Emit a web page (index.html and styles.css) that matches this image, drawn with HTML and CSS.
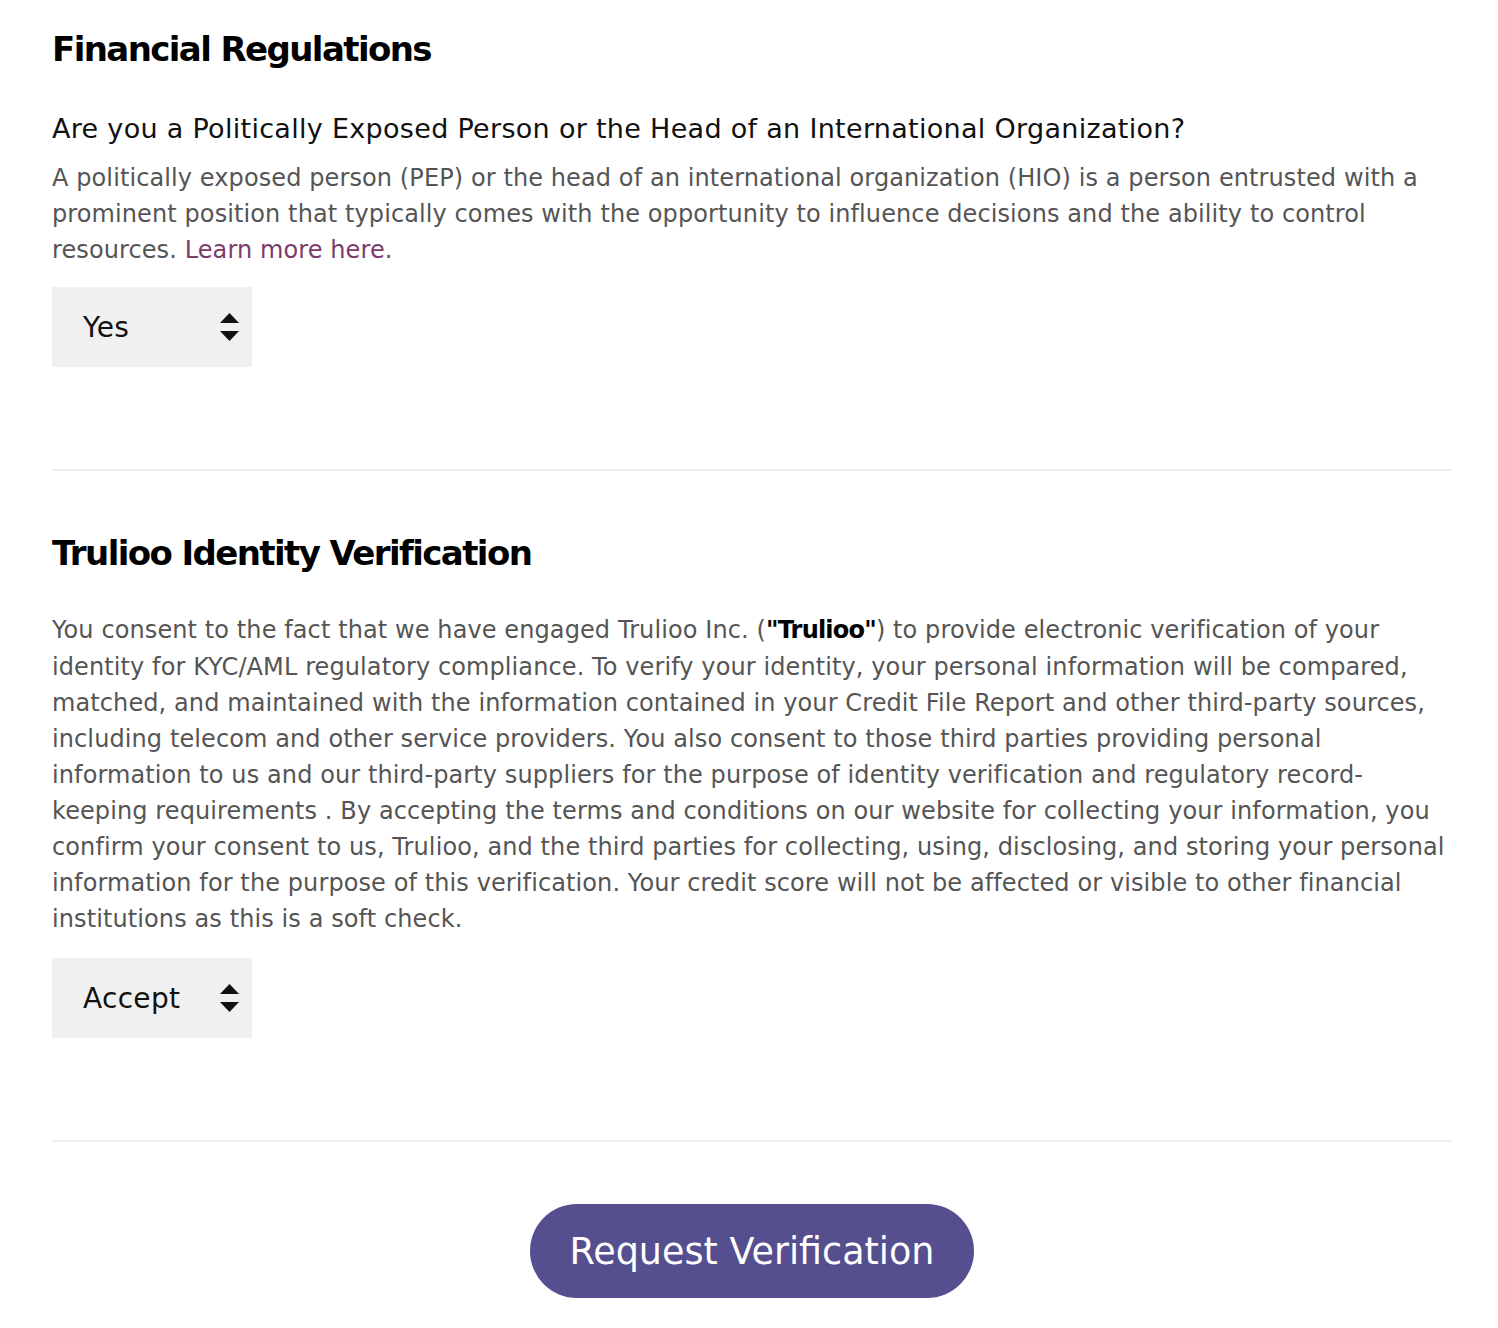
FILE: index.html
```html
<!DOCTYPE html>
<html lang="en">
<head>
<meta charset="utf-8">
<title>Verification</title>
<link rel="stylesheet" href="styles.css">
</head>
<body>
<main class="page">
  <section class="section">
    <h2 class="section-title">Financial Regulations</h2>
    <h3 class="question">Are you a Politically Exposed Person or the Head of an International Organization?</h3>
    <p class="desc">A politically exposed person (PEP) or the head of an international organization (HIO) is a person entrusted with a prominent position that typically comes with the opportunity to influence decisions and the ability to control resources. <a class="link" href="#">Learn more here</a>.</p>
    <div class="select">
      <span class="select-value">Yes</span>
      <svg class="select-arrows" width="19" height="28" viewBox="0 0 19 28"><path d="M9.5 0L19 10H0Z"/><path d="M0 18H19L9.5 28Z"/></svg>
    </div>
  </section>
  <hr class="divider">
  <section class="section section-2">
    <h2 class="section-title">Trulioo Identity Verification</h2>
    <p class="desc desc-long">You consent to the fact that we have engaged Trulioo Inc. (<strong class="strong">"Trulioo"</strong>) to provide electronic verification of your identity for KYC/AML regulatory compliance. To verify your identity, your personal information will be compared, matched, and maintained with the information contained in your Credit File Report and other third-party sources, including telecom and other service providers. You also consent to those third parties providing personal information to us and our third-party suppliers for the purpose of identity verification and regulatory record-keeping requirements . By accepting the terms and conditions on our website for collecting your information, you confirm your consent to us, Trulioo, and the third parties for collecting, using, disclosing, and storing your personal information for the purpose of this verification. Your credit score will not be affected or visible to other financial institutions as this is a soft check.</p>
    <div class="select select-2">
      <span class="select-value">Accept</span>
      <svg class="select-arrows" width="19" height="28" viewBox="0 0 19 28"><path d="M9.5 0L19 10H0Z"/><path d="M0 18H19L9.5 28Z"/></svg>
    </div>
  </section>
  <hr class="divider">
  <div class="actions">
    <button class="btn" type="button">Request Verification</button>
  </div>
</main>
</body>
</html>
```
FILE: styles.css
```css
html, body {
  margin: 0;
  padding: 0;
  background: #fff;
}
body {
  font-family: "DejaVu Sans", "Noto Sans", sans-serif;
  color: #555;
}
.page {
  width: 1400px;
  margin: 0 0 0 52px;
  padding-top: 27px;
}
.section-title {
  margin: 0;
  font-size: 34px;
  line-height: 44px;
  font-weight: 700;
  color: #000;
  letter-spacing: -1.6px;
}
.question {
  margin: 40px 0 0;
  font-size: 27px;
  line-height: 36px;
  font-weight: 400;
  color: #111;
  letter-spacing: 0.3px;
}
.desc {
  margin: 13px 0 0;
  font-size: 24px;
  line-height: 36px;
  color: #555;
  letter-spacing: 0.1px;
}
.link {
  color: #7b3b6b;
  text-decoration: none;
}
.strong {
  display: inline-block;
  line-height: 38px;
  color: #000;
  font-weight: 700;
  letter-spacing: -0.8px;
}
.select {
  margin-top: 19px;
  width: 200px;
  height: 80px;
  box-sizing: border-box;
  background: #f0f0f0;
  display: flex;
  align-items: center;
  justify-content: space-between;
  padding: 0 13px 0 31px;
}
.select-2 {
  margin-top: 21px;
}
.select-value {
  font-size: 28px;
  color: #111;
  letter-spacing: 0.3px;
}
.select-arrows {
  fill: #111;
  display: block;
}
.divider {
  margin: 102px 0 0;
  border: 0;
  height: 2px;
  background: #eeeeee;
}
.section-2 {
  padding-top: 60px;
}
.desc-long {
  margin-top: 36px;
}
.actions {
  display: flex;
  justify-content: center;
  padding-top: 62px;
}
.btn {
  width: 444px;
  height: 94px;
  border: 0;
  border-radius: 47px;
  background: #554e8f;
  color: #fff;
  font-family: "DejaVu Sans", "Noto Sans", sans-serif;
  font-size: 36.5px;
  cursor: pointer;
}
```
